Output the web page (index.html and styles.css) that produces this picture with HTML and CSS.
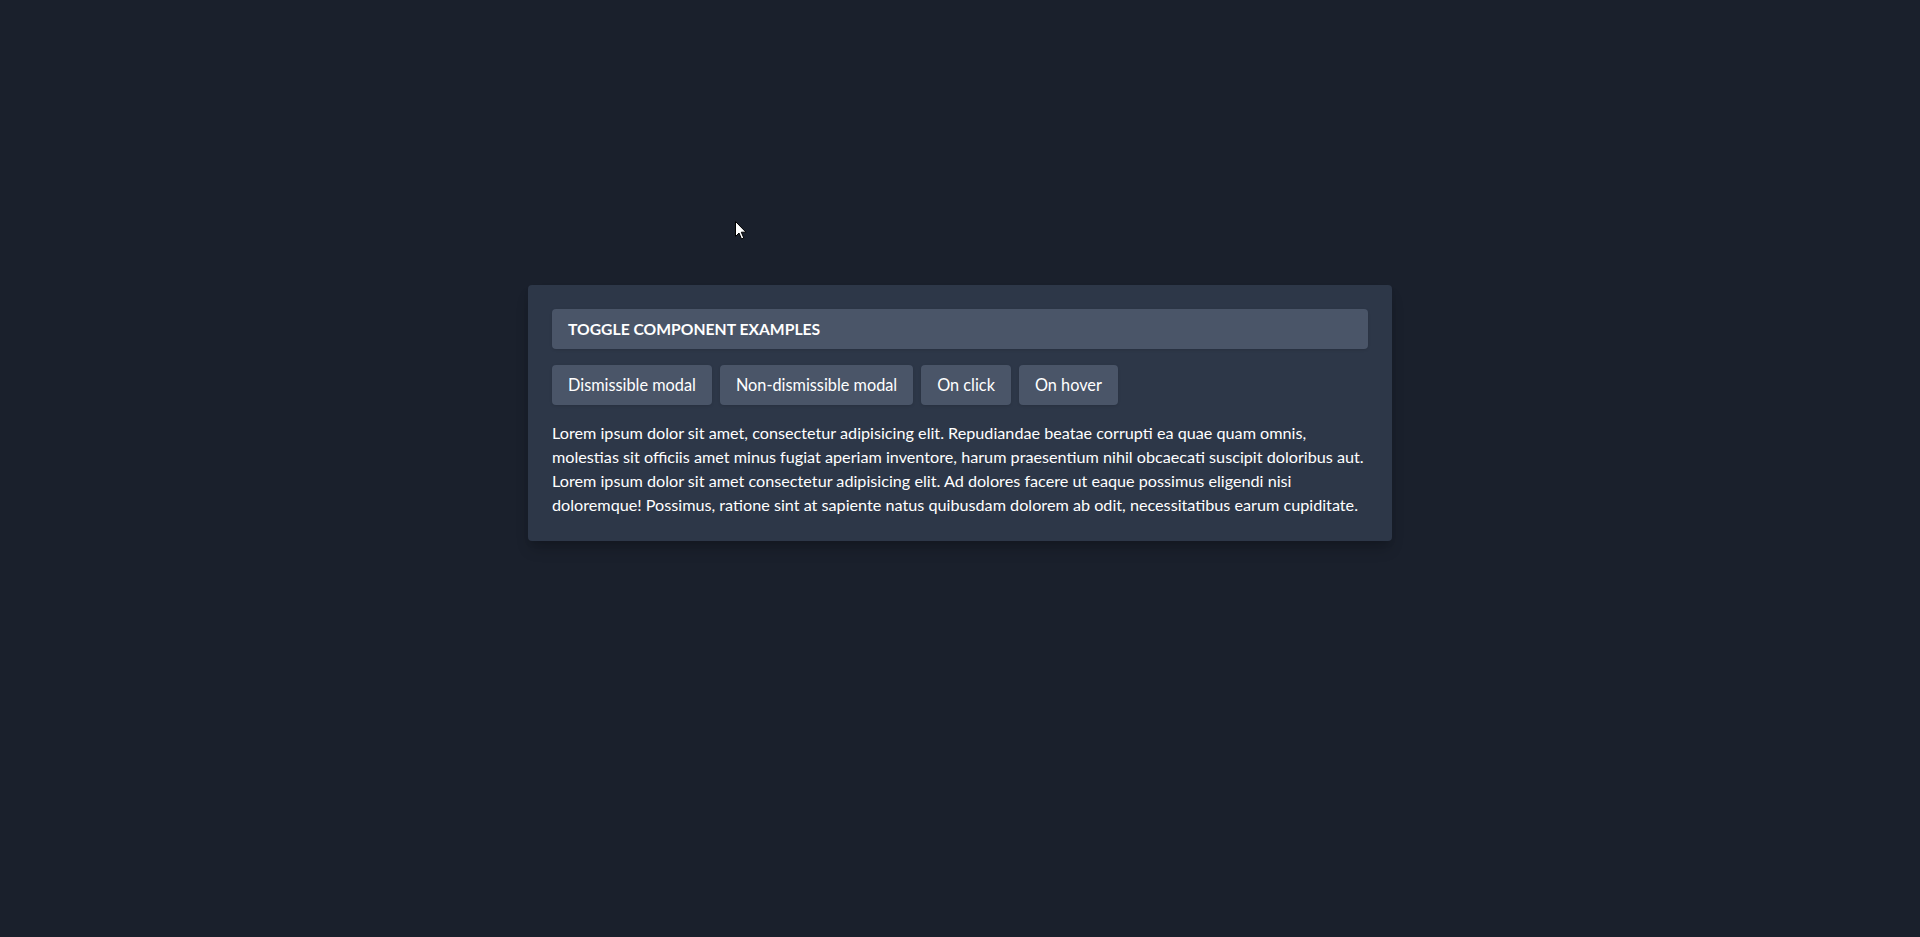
FILE: index.html
```html
<!DOCTYPE html>
<html lang="en">
<head>
<meta charset="utf-8">
<title>Toggle component examples</title>
<link rel="stylesheet" href="styles.css">
</head>
<body>
<main class="page">
  <section class="card">
    <h1 class="card-title">Toggle component examples</h1>
    <div class="actions">
      <button class="btn" type="button">Dismissible modal</button>
      <button class="btn" type="button">Non-dismissible modal</button>
      <button class="btn" type="button">On click</button>
      <button class="btn" type="button">On hover</button>
    </div>
    <p class="text">Lorem ipsum dolor sit amet, consectetur adipisicing elit. Repudiandae beatae corrupti ea quae quam omnis, molestias sit officiis amet minus fugiat aperiam inventore, harum praesentium nihil obcaecati suscipit doloribus aut. Lorem ipsum dolor sit amet consectetur adipisicing elit. Ad dolores facere ut eaque possimus eligendi nisi doloremque! Possimus, ratione sint at sapiente natus quibusdam dolorem ab odit, necessitatibus earum cupiditate.</p>
  </section>
</main>
<svg class="cursor" width="12" height="19" viewBox="0 0 12 19" aria-hidden="true">
  <path d="M0.5 0.5 L0.5 15.5 L4 12 L6.5 18 L8.8 17 L6.3 11.2 L11 11.2 Z" fill="#fff" stroke="#000" stroke-width="1"/>
</svg>
</body>
</html>
```
FILE: styles.css
```css
html, body {
  margin: 0;
  padding: 0;
}
body {
  background: #1a202c;
  color: #f7fafc;
  font-family: Lato, "Open Sans", sans-serif;
  font-size: 16px;
  line-height: 24px;
  min-height: 937px;
}
.page {
  display: flex;
  justify-content: center;
  padding-top: 285px;
}
.card {
  width: 864px;
  box-sizing: border-box;
  padding: 24px;
  background: #2d3748;
  border-radius: 4px;
  box-shadow: 0 10px 15px -3px rgba(0,0,0,0.2), 0 4px 6px -2px rgba(0,0,0,0.1);
}
.card-title {
  margin: 0;
  height: 40px;
  display: flex;
  align-items: center;
  padding: 0 16px;
  background: #4a5568;
  border-radius: 4px;
  font-size: 15.7px;
  font-weight: 700;
  text-transform: uppercase;
  color: #fff;
  box-shadow: 0 1px 3px rgba(0,0,0,0.12);
}
.actions {
  display: flex;
  gap: 8px;
  margin-top: 16px;
}
.btn {
  height: 40px;
  padding: 0 16px;
  border: 0;
  border-radius: 4px;
  background: #4a5568;
  color: #fff;
  font-family: inherit;
  font-size: 16.3px;
  line-height: 24px;
  cursor: pointer;
  box-shadow: 0 1px 3px rgba(0,0,0,0.12);
}
.text {
  margin: 16px 0 0;
  font-size: 16.2px;
  line-height: 24px;
  color: #fff;
}
.cursor {
  position: absolute;
  left: 735px;
  top: 221px;
}
```
